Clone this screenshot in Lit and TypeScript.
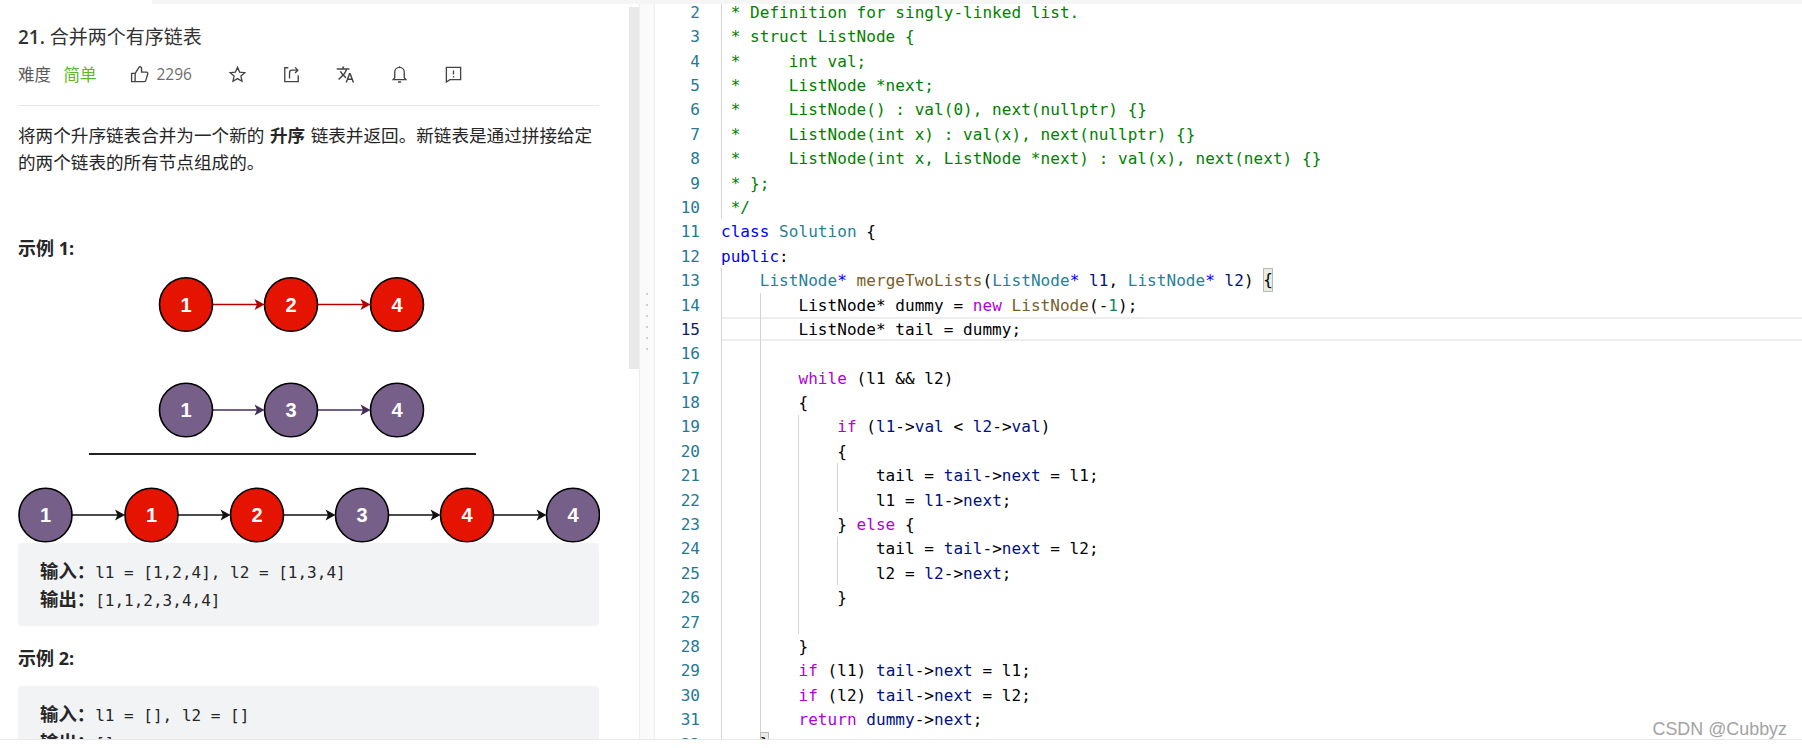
import { LitElement, css, html, svg } from 'lit';
import { customElement } from 'lit/decorators.js';

type Token = string | [string, string];

const LINE_H = 24.4;
const INDENT = 38.64;
const FIRST_LINE = 2;

// c comment, k keyword, t type, f function, v variable, p control, n number, b matched bracket
const CODE: Token[][] = [
  [[' * Definition for singly-linked list.', 'c']],
  [[' * struct ListNode {', 'c']],
  [[' *     int val;', 'c']],
  [[' *     ListNode *next;', 'c']],
  [[' *     ListNode() : val(0), next(nullptr) {}', 'c']],
  [[' *     ListNode(int x) : val(x), next(nullptr) {}', 'c']],
  [[' *     ListNode(int x, ListNode *next) : val(x), next(next) {}', 'c']],
  [[' * };', 'c']],
  [[' */', 'c']],
  [['class', 'k'], ' ', ['Solution', 't'], ' {'],
  [['public', 'k'], ':'],
  ['    ', ['ListNode', 't'], ['*', 'k'], ' ', ['mergeTwoLists', 'f'], '(', ['ListNode', 't'], ['*', 'k'], ' ', ['l1', 'v'], ', ', ['ListNode', 't'], ['*', 'k'], ' ', ['l2', 'v'], ') ', ['{', 'b']],
  ['        ListNode* dummy = ', ['new', 'p'], ' ', ['ListNode', 'f'], '(-', ['1', 'n'], ');'],
  ['        ListNode* tail = dummy;'],
  [''],
  ['        ', ['while', 'p'], ' (l1 && l2)'],
  ['        {'],
  ['            ', ['if', 'p'], ' (', ['l1', 'v'], '->', ['val', 'v'], ' < ', ['l2', 'v'], '->', ['val', 'v'], ')'],
  ['            {'],
  ['                tail = ', ['tail', 'v'], '->', ['next', 'v'], ' = l1;'],
  ['                l1 = ', ['l1', 'v'], '->', ['next', 'v'], ';'],
  ['            } ', ['else', 'p'], ' {'],
  ['                tail = ', ['tail', 'v'], '->', ['next', 'v'], ' = l2;'],
  ['                l2 = ', ['l2', 'v'], '->', ['next', 'v'], ';'],
  ['            }'],
  [''],
  ['        }'],
  ['        ', ['if', 'p'], ' (l1) ', ['tail', 'v'], '->', ['next', 'v'], ' = l1;'],
  ['        ', ['if', 'p'], ' (l2) ', ['tail', 'v'], '->', ['next', 'v'], ' = l2;'],
  ['        ', ['return', 'p'], ' ', ['dummy', 'v'], '->', ['next', 'v'], ';'],
  ['    ', ['}', 'b']],
];

const GUIDES = [
  { indent: 0, from: 2, to: 10 },
  { indent: 0, from: 13, to: 32 },
  { indent: 1, from: 14, to: 31 },
  { indent: 2, from: 19, to: 27 },
  { indent: 3, from: 21, to: 22 },
  { indent: 3, from: 24, to: 25 },
];

const RED = { fill: '#e51400', line: '#b20000' };
const PURPLE = { fill: '#76608a', line: '#432d57' };
const DARK = '#111';

const node = (cx: number, cy: number, label: string, fill: string) => svg`
  <ellipse cx=${cx} cy=${cy} rx="26.5" ry="26.8" fill=${fill} stroke="#000" stroke-width="1.6"></ellipse>
  <text x=${cx} y=${cy + 7} text-anchor="middle" class="num">${label}</text>
`;

const arrow = (x1: number, x2: number, y: number, color: string) => svg`
  <line x1=${x1} y1=${y} x2=${x2 - 6} y2=${y} stroke=${color} stroke-width="1.6"></line>
  <path d="M${x2} ${y}l-10 -5.500l2.500 5.500l-2.500 5.500z" fill=${color}></path>
`;

const chain = (xs: number[], y: number, labels: string[], fills: string[], lines: string[]) => svg`
  ${xs.slice(1).map((x, i) => arrow(xs[i] + 26.5, x - 26.5, y, lines[i]))}
  ${xs.map((x, i) => node(x, y, labels[i], fills[i]))}
`;

@customElement('app-root')
export class AppRoot extends LitElement {
  static styles = css`
    :host {
      display: block;
      width: 1802px;
      height: 748px;
      overflow: hidden;
      background: #fff;
      color: #262626;
      font-family: 'Open Sans', 'Noto Sans CJK SC', sans-serif;
    }
    .frame {
      position: relative;
      height: 739px;
      border-bottom: 1px solid #e8e8e8;
      box-sizing: content-box;
      background: #fafafa;
    }
    .top {
      display: flex;
      height: 4px;
    }
    .top-left {
      width: 152px;
      background: #fff;
    }
    .top-right {
      flex: 1;
      background: #f5f5f5;
    }
    .panes {
      display: flex;
      height: 735px;
    }

    /* problem description */
    .problem {
      position: relative;
      width: 640px;
      box-sizing: border-box;
      padding: 0 40px 0 18px;
      background: #fff;
      border-right: 1px solid #eee;
      overflow: hidden;
    }
    .scrollbar {
      position: absolute;
      top: 3px;
      left: 629px;
      width: 10px;
      height: 362px;
      background: #e9e9e9;
    }
    .title {
      margin-top: 19px;
      font-size: 19px;
      line-height: 28px;
      color: #333;
    }
    .title b {
      font-weight: 600;
    }
    .meta {
      display: flex;
      align-items: center;
      height: 24px;
      margin-top: 11px;
      font-size: 16.5px;
      color: #595959;
    }
    .easy {
      margin-left: 12.5px;
      color: #5cb82a;
    }
    .meta svg {
      display: block;
      width: 19px;
      height: 19px;
      fill: none;
      stroke: #444;
      stroke-width: 1.7;
    }
    .meta .thumb {
      margin-left: 33px;
    }
    .likes {
      margin-left: 8px;
      width: 71px;
      font-size: 15.5px;
      color: #6e6e6e;
    }
    .meta .act {
      margin-right: 35px;
    }
    .meta svg.solid {
      fill: #444;
      stroke: none;
    }
    .rule {
      height: 1px;
      margin-top: 19px;
      background: #e6e6e6;
    }
    .desc {
      margin: 16px 0 0;
      font-size: 17.6px;
      line-height: 27px;
      word-spacing: 1px;
    }
    .desc b {
      font-weight: 700;
    }
    h4 {
      margin: 0;
      font-size: 18px;
      line-height: 27px;
      font-weight: 700;
    }
    h4.first {
      margin-top: 59px;
    }
    h4.second {
      margin-top: 18.5px;
    }
    .diagram {
      display: block;
      width: 582px;
      height: 269px;
      margin-top: 12px;
    }
    .diagram .num {
      font: bold 20px 'Liberation Sans', sans-serif;
      fill: #fff;
    }
    .sample {
      margin: 0;
      height: 83px;
      box-sizing: border-box;
      padding: 15.5px 21px 0 22px;
      background: #f2f3f5;
      border-radius: 4px;
      font-family: 'DejaVu Sans Mono', 'Noto Sans CJK SC', monospace;
      font-size: 16px;
      line-height: 28px;
      color: #262626;
    }
    .sample.two {
      height: auto;
      margin-top: 14.5px;
      padding-bottom: 13px;
    }
    .sample b {
      font-family: 'Noto Sans CJK SC', sans-serif;
      font-size: 18.4px;
      line-height: 1;
      font-weight: 700;
    }

    /* drag handle between panes */
    .handle {
      display: flex;
      flex-direction: column;
      align-items: center;
      gap: 9px;
      width: 14px;
      padding-top: 289px;
    }
    .handle i {
      width: 2px;
      height: 2px;
      background: #cfcfcf;
    }

    /* editor */
    .editor {
      position: relative;
      flex: 1;
      background: #fff;
      border-left: 1px solid #eee;
      overflow: hidden;
    }
    .lines {
      position: relative;
      margin-top: -4.2px;
      font-family: 'DejaVu Sans Mono', monospace;
      font-size: 16px;
      letter-spacing: 0.05px;
      color: #000;
    }
    .line {
      display: flex;
      height: 24.4px;
      line-height: 25.4px;
    }
    .no {
      width: 45px;
      text-align: right;
      color: #237893;
      flex: none;
    }
    .line.active .no {
      color: #0b216f;
    }
    .src {
      flex: 1;
      margin-left: 21px;
      white-space: pre;
      box-sizing: border-box;
    }
    .line.active .src {
      line-height: 21.4px;
      border-top: 2px solid #eeeeee;
      border-bottom: 2px solid #eeeeee;
    }
    .guide {
      position: absolute;
      width: 1px;
      background: #d3d3d3;
    }
    .c { color: #008000; }
    .k { color: #0000ff; }
    .t { color: #267f99; }
    .f { color: #795e26; }
    .v { color: #001080; }
    .p { color: #af00db; }
    .n { color: #098658; }
    .b {
      display: inline-block;
      height: 24px;
      line-height: 24px;
      vertical-align: top;
      background: #e8ede3;
      box-shadow: inset 0 0 0 1px #b9b9b9;
    }

    .mark {
      position: absolute;
      right: 15px;
      bottom: 0;
      font-family: 'Liberation Sans', sans-serif;
      font-size: 17.9px;
      line-height: 20px;
      color: #a3a3a3;
    }
  `;

  private renderToken(t: Token) {
    return typeof t === 'string' ? t : html`<span class=${t[1]}>${t[0]}</span>`;
  }

  private renderDiagram() {
    const top = [168, 273, 379];
    const all = [27.5, 133.5, 239, 344, 449, 555];
    const r = RED.fill;
    const u = PURPLE.fill;
    return html`
      <svg class="diagram" viewBox="0 0 582 269">
        ${chain(top, 30.5, ['1', '2', '4'], [r, r, r], [RED.line, RED.line])}
        ${chain(top, 136, ['1', '3', '4'], [u, u, u], [PURPLE.line, PURPLE.line])}
        <line x1="71" y1="180" x2="458" y2="180" stroke="#222" stroke-width="2"></line>
        ${chain(all, 241, ['1', '1', '2', '3', '4', '4'], [u, r, r, u, r, u], [DARK, DARK, DARK, DARK, DARK])}
      </svg>
    `;
  }

  render() {
    return html`
      <div class="frame">
        <div class="top"><div class="top-left"></div><div class="top-right"></div></div>
        <div class="panes">
          <section class="problem">
            <div class="title"><b>21.</b> 合并两个有序链表</div>
            <div class="meta">
              <span>难度</span>
              <span class="easy">简单</span>
              <svg class="thumb" viewBox="0 0 24 24">
                <path d="M2 10.500h4.500V21H2zM6.500 10.500l5.500-8.500c1.600 0 2.600 1.100 2.600 2.600V9H21c1 0 1.700 1 1.400 2l-2.400 8.500c-.2.900-1 1.500-1.900 1.500H6.500"></path>
              </svg>
              <span class="likes">2296</span>
              <svg class="act" viewBox="0 0 24 24">
                <path d="M12 3l2.700 6 6.500.7-4.900 4.300 1.400 6.500L12 17.200 6.300 20.500l1.400-6.500-4.900-4.300 6.500-.7z"></path>
              </svg>
              <svg class="act" viewBox="0 0 24 24">
                <path d="M8 3.500H3.500v17.500h17V13M9.500 17v-7c0-2 1-3.500 3-3.500h7M16.500 3l3.500 3.500-3.500 3.500"></path>
              </svg>
              <svg class="act solid" viewBox="0 0 24 24">
                <path d="M12.870 15.070l-2.540-2.510.03-.03c1.740-1.940 2.980-4.170 3.710-6.530H17V4h-7V2H8v2H1v1.990h11.170C11.500 7.920 10.440 9.750 9 11.350 8.070 10.320 7.300 9.190 6.690 8h-2c.73 1.630 1.730 3.170 2.980 4.560l-5.090 5.020L4 19l5-5 3.110 3.110.76-2.040zM18.500 10h-2L12 22h2l1.120-3h4.750L21 22h2l-4.500-12zm-2.620 7l1.620-4.330L19.120 17h-3.240z"></path>
              </svg>
              <svg class="act" viewBox="0 0 24 24">
                <path d="M12 3a6 6 0 0 0-6 6v7l-2 2.500h16L18 16V9a6 6 0 0 0-6-6zM12 1.500V3M10 21.500h4"></path>
              </svg>
              <svg class="act" viewBox="0 0 24 24">
                <path d="M3 3h18v15.500H7.500L3 21.500zM12 7v5M12 14v1.800"></path>
              </svg>
            </div>
            <div class="rule"></div>
            <p class="desc">将两个升序链表合并为一个新的 <b>升序</b> 链表并返回。新链表是通过拼接给定的两个链表的所有节点组成的。</p>
            <h4 class="first">示例 1:</h4>
            ${this.renderDiagram()}
            <pre class="sample"><b>输入：</b>l1 = [1,2,4], l2 = [1,3,4]
<b>输出：</b>[1,1,2,3,4,4]</pre>
            <h4 class="second">示例 2:</h4>
            <pre class="sample two"><b>输入：</b>l1 = [], l2 = []
<b>输出：</b>[]</pre>
            <div class="scrollbar"></div>
          </section>
          <div class="handle">${[0, 1, 2, 3, 4, 5].map(() => html`<i></i>`)}</div>
          <section class="editor">
            <div class="lines">
              ${CODE.map(
                (tokens, i) => html`
                  <div class="line ${i + FIRST_LINE === 15 ? 'active' : ''}">
                    <span class="no">${i + FIRST_LINE}</span>
                    <span class="src">${tokens.map((t) => this.renderToken(t))}</span>
                  </div>
                `,
              )}
              ${GUIDES.map(
                (g) => html`<div
                  class="guide"
                  style="left:${66 + g.indent * INDENT}px;top:${(g.from - FIRST_LINE) * LINE_H}px;height:${(g.to - g.from + 1) * LINE_H}px"
                ></div>`,
              )}
            </div>
          </section>
        </div>
        <div class="mark">CSDN @Cubbyz</div>
      </div>
    `;
  }
}
